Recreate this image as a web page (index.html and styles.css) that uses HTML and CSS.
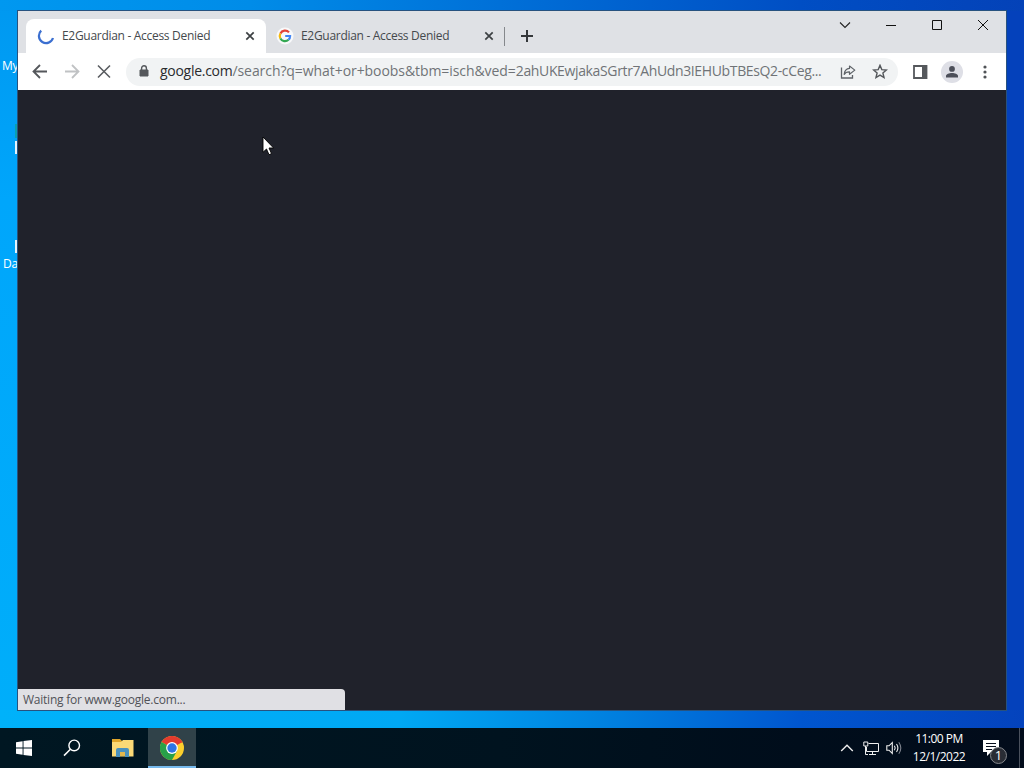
FILE: index.html
```html
<!DOCTYPE html>
<html>
	<head>
		<meta charset="utf-8">
		<title>Desktop</title>
		<link rel="stylesheet" href="styles.css">
	</head>
	<body>
		<div class="desktop">
			<span class="desktop-label label-my">My</span>
			<span class="desktop-icon-edge edge-green"></span>
			<span class="desktop-icon-edge edge-first"></span>
			<span class="desktop-icon-edge edge-second"></span>
			<span class="desktop-label label-da">Da</span>

			<div class="window">
				<div class="tab-strip">
					<div class="tab tab-active">
						<svg class="tab-icon" width="18" height="18" viewBox="0 0 18 18">
							<path d="M4.2 3.6A7.2 7.2 0 1 0 16 11" fill="none" stroke="#3b6fd0" stroke-width="2.2"/>
						</svg>
						<span class="tab-title">E2Guardian - Access Denied</span>
						<svg class="tab-close" width="10" height="10" viewBox="0 0 10 10">
							<path d="M1.3 1.3L8.7 8.7M8.7 1.3L1.3 8.7" stroke="#3c4043" stroke-width="1.7"/>
						</svg>
					</div>
					<div class="tab">
						<svg class="tab-icon" width="18" height="18" viewBox="0 0 18 18">
							<circle cx="9" cy="9" r="8.5" fill="#f8f9fa"/>
							<path d="M13 5.4A5.2 5.2 0 0 0 4.4 6.5" fill="none" stroke="#e44335" stroke-width="2.2"/>
							<path d="M4.4 6.5A5.2 5.2 0 0 0 4.4 11.5" fill="none" stroke="#f6b90a" stroke-width="2.2"/>
							<path d="M4.4 11.5A5.2 5.2 0 0 0 12.5 12.8" fill="none" stroke="#34a853" stroke-width="2.2"/>
							<path d="M12.5 12.8A5.2 5.2 0 0 0 14.1 9H9.2" fill="none" stroke="#4285f4" stroke-width="2.2"/>
						</svg>
						<span class="tab-title">E2Guardian - Access Denied</span>
						<svg class="tab-close" width="10" height="10" viewBox="0 0 10 10">
							<path d="M1.3 1.3L8.7 8.7M8.7 1.3L1.3 8.7" stroke="#3c4043" stroke-width="1.7"/>
						</svg>
					</div>
					<span class="tab-separator"></span>
					<svg class="new-tab" width="12" height="12" viewBox="0 0 12 12">
						<path d="M6 0V12M0 6H12" stroke="#34373a" stroke-width="2"/>
					</svg>
					<div class="window-controls">
						<svg width="12" height="12" viewBox="0 0 12 12"><path d="M1 3.5L6 8.5L11 3.5" fill="none" stroke="#222" stroke-width="1.1"/></svg>
						<svg width="12" height="12" viewBox="0 0 12 12"><path d="M1 6.5H11" stroke="#111"/></svg>
						<svg width="12" height="12" viewBox="0 0 12 12"><path d="M1.5 1.5H10.5V10.5H1.5Z" fill="none" stroke="#111"/></svg>
						<svg width="12" height="12" viewBox="0 0 12 12"><path d="M1 1L11 11M11 1L1 11" stroke="#111"/></svg>
					</div>
				</div>

				<div class="toolbar">
					<div class="nav-buttons">
						<svg width="16" height="16" viewBox="0 0 16 16"><path d="M15 7.5H2M8 1L1.5 7.5L8 14" fill="none" stroke="#54575b" stroke-width="1.8"/></svg>
						<svg width="16" height="16" viewBox="0 0 16 16"><path d="M1 7.5H14M8 1L14.5 7.5L8 14" fill="none" stroke="#c0c2c4" stroke-width="1.8"/></svg>
						<svg width="16" height="16" viewBox="0 0 16 16"><path d="M2 1.5L14 13.5M14 1.5L2 13.5" stroke="#5a5d61" stroke-width="1.6"/></svg>
					</div>
					<div class="address-bar">
						<svg class="lock" width="10" height="13" viewBox="0 0 10 13">
							<path d="M1 5H9V11H1Z" fill="#55585c" stroke="#55585c" stroke-linejoin="round"/>
							<path d="M2.6 5V3.2A2.4 2.4 0 0 1 7.4 3.2V5" fill="none" stroke="#55585c" stroke-width="1.4"/>
						</svg>
						<span class="url"><span class="url-host">google.com</span><span class="url-query">/search?q=what+or+boobs&amp;tbm=isch&amp;ved=</span>2ahUKEwjakaSGrtr7AhUdn3IEHUbTBEsQ2-cCeg...</span>
						<svg class="share" width="16" height="16" viewBox="0 0 16 16">
							<path d="M1.5 3.5V14H12.5V11" fill="none" stroke="#5f6368" stroke-width="1.3"/>
							<path d="M9.5 2L14.8 6.1L9.5 10.3V7.8C7 7.7 5.3 8.5 4.2 10.4C4.5 7 6.3 4.7 9.5 4.4Z" fill="none" stroke="#5f6368" stroke-width="1.2" stroke-linejoin="round"/>
						</svg>
						<svg class="star" width="16" height="16" viewBox="0 0 16 16">
							<path d="M8 1.3L9.8 5.6L14.4 6L10.9 9L12 13.5L8 11.1L4 13.5L5.1 9L1.6 6L6.2 5.6Z" fill="none" stroke="#54575b" stroke-width="1.4"/>
						</svg>
					</div>
					<svg class="side-panel" width="15" height="14" viewBox="0 0 15 14">
						<path d="M1 1H13.5V13H1Z" fill="none" stroke="#55585c" stroke-width="1.8"/>
						<path d="M9 1H14V13H9Z" fill="#55585c"/>
					</svg>
					<svg class="avatar" width="22" height="22" viewBox="0 0 22 22">
						<circle cx="11" cy="11" r="11" fill="#dedfe6"/>
						<circle cx="11" cy="7.9" r="2.9" fill="#4c4f59"/>
						<path d="M5 16.5V15C5 12.8 8.2 11.9 11 11.9S17 12.8 17 15V16.5Z" fill="#4c4f59"/>
					</svg>
					<svg class="menu" width="4" height="14" viewBox="0 0 4 14">
						<circle cx="2" cy="2" r="1.6" fill="#505357"/>
						<circle cx="2" cy="7" r="1.6" fill="#505357"/>
						<circle cx="2" cy="12" r="1.6" fill="#505357"/>
					</svg>
				</div>

				<div class="page">
					<div class="status">Waiting for www.google.com...</div>
				</div>
			</div>

			<svg class="cursor" width="13" height="20" viewBox="0 0 13 20">
				<path d="M1 1V16.3L4.5 13L7 18.7L9.5 17.6L7 12H11.6Z" fill="#fff" stroke="#000" stroke-width="0.9"/>
			</svg>
		</div>

		<div class="taskbar">
			<div class="task">
				<svg width="16" height="16" viewBox="0 0 16 16">
					<path d="M0 2.2L6.6 1.3V7.5H0ZM7.5 1.1L16 0V7.5H7.5ZM0 8.5H6.6V14.7L0 13.8ZM7.5 8.5H16V16L7.5 14.9Z" fill="#fff"/>
				</svg>
			</div>
			<div class="task">
				<svg width="18" height="18" viewBox="0 0 18 18">
					<circle cx="11.2" cy="6.4" r="5.3" fill="none" stroke="#fff" stroke-width="1.4"/>
					<path d="M7.4 10.2L1 16.6" stroke="#fff" stroke-width="1.5"/>
				</svg>
			</div>
			<div class="task">
				<svg class="folder" width="22" height="18" viewBox="0 0 22 18">
					<path d="M0 0H8L10 2H21V6H0Z" fill="#e0a62b"/>
					<path d="M0 3H9L11 1H21.5V17.5H0Z" fill="#fbd976"/>
					<path d="M4 18V11Q4 9 6 9H15Q17 9 17 11V18H13V13H8V18Z" fill="#4a91bd"/>
					<path d="M8 13H13V17H8Z" fill="#e2b84e"/>
				</svg>
			</div>
			<div class="task task-active">
				<svg width="24" height="24" viewBox="0 0 24 24">
					<circle cx="12" cy="12" r="12" fill="#fbcf2d"/>
					<path d="M12 12L1.6 6A12 12 0 0 1 22.4 6Z" fill="#e33b2e"/>
					<path d="M12 6.5H22.6L22.4 6L12 5Z" fill="#e33b2e"/>
					<path d="M1.6 6A12 12 0 0 0 12 24L17 15L12 12Z" fill="#28a149"/>
					<circle cx="12" cy="12" r="5.9" fill="#fff"/>
					<circle cx="12" cy="12" r="4.7" fill="#2e75e4"/>
				</svg>
			</div>
			<div class="tray">
				<svg class="tray-chevron" width="14" height="10" viewBox="0 0 14 10"><path d="M1.2 8L7 2.2L12.8 8" fill="none" stroke="#eee" stroke-width="1.4"/></svg>
				<svg class="tray-network" width="17" height="15" viewBox="0 0 17 15">
					<path d="M5.5 2.5H15.5V10.5H3.5V6M9.5 10.5V13.5M6 13.5H13" fill="none" stroke="#eee"/>
					<path d="M.8 1H4.8V5H.8ZM2.5 5V13.5H5" fill="none" stroke="#eee"/>
				</svg>
				<svg class="tray-sound" width="17" height="14" viewBox="0 0 17 14">
					<path d="M.8 4.8H3L6.3 1.5V12.5L3 9.2H.8Z" fill="none" stroke="#eee" stroke-width="1.1"/>
					<path d="M8.4 4.7Q10 7 8.4 9.3M10.5 3Q13.3 7 10.5 11" fill="none" stroke="#eee" stroke-width="1.1"/>
					<path d="M12.8 1.3Q16.8 7 12.8 12.7" fill="none" stroke="#7d828c" stroke-width="1.1"/>
				</svg>
				<div class="clock">
					<span class="clock-time">11:00 PM</span>
					<span class="clock-date">12/1/2022</span>
				</div>
				<div class="notifications">
					<svg width="17" height="17" viewBox="0 0 17 17">
						<path d="M0 0H16V12H8L4 16V12H0Z" fill="#fff"/>
						<path d="M3 3.5H13M3 6.5H13M3 9.5H9" stroke="#08101e"/>
					</svg>
					<span class="badge">1</span>
				</div>
				<span class="show-desktop"></span>
			</div>
		</div>
	</body>
</html>
```
FILE: styles.css
```css
body {
	margin: 0;
	width: 1024px;
	height: 768px;
	overflow: hidden;
	display: flex;
	flex-direction: column;
	font-family: "Open Sans", "Noto Sans", sans-serif;
	font-size: 12px;
}

svg {
	display: block;
	flex: none;
}

.desktop {
	position: relative;
	height: 728px;
	background:
		linear-gradient(90deg, #0098f0 0, #008ce8 250px, #0070d8 500px, #004ec4 800px, #0442b8 1024px) top / 100% 11px no-repeat,
		linear-gradient(90deg, #00b2fa 0, #00a8f4 400px, #0082e0 600px, #0056cf 800px, #0443bd 1024px) bottom / 100% 18px no-repeat,
		linear-gradient(180deg, #0098f0, #00a6fb 200px, #00aefa) left / 50% 100% no-repeat,
		#0441bb;
}

/* desktop icons sticking out from behind the window */
.desktop-label {
	position: absolute;
	color: #fff;
	line-height: 16px;
	letter-spacing: -0.2px;
}

.label-my {
	left: 2px;
	top: 58px;
}

.label-da {
	left: 3px;
	top: 256px;
}

.desktop-icon-edge {
	position: absolute;
	left: 15px;
	width: 2px;
	height: 13px;
	background: #e6f3fb;
}

.edge-green {
	top: 124px;
	height: 14px;
	background: #0b9fae;
}

.edge-first {
	top: 141px;
}

.edge-second {
	top: 240px;
}

.window {
	position: absolute;
	left: 17px;
	top: 10px;
	width: 988px;
	height: 699px;
	border: 1px solid #27527f;
	display: flex;
	flex-direction: column;
	background: #fff;
}

.tab-strip {
	height: 42px;
	display: flex;
	align-items: flex-end;
	background: #dfe1e5;
}

.tab {
	box-sizing: border-box;
	width: 238px;
	height: 34px;
	display: flex;
	align-items: center;
	padding: 0 10px 0 10px;
	color: #45494d;
}

.tab-active {
	width: 240px;
	margin-left: 8px;
	padding-left: 11px;
	padding-right: 11px;
	border-radius: 8px 8px 0 0;
	background: #fff;
}

.tab-title {
	margin-left: 7px;
	padding-bottom: 1px;
	letter-spacing: -0.3px;
	white-space: nowrap;
}

.tab-close {
	margin-left: auto;
}

.tab-separator {
	width: 1px;
	height: 19px;
	margin: 0 16px 7px 0;
	background: #85888c;
}

.new-tab {
	margin-bottom: 11px;
}

.window-controls {
	display: flex;
	gap: 34px;
	align-self: flex-start;
	margin: 8px 17px 0 auto;
}

.toolbar {
	height: 37px;
	display: flex;
	align-items: center;
	background: #fff;
}

.nav-buttons {
	display: flex;
	gap: 16px;
	margin-left: 14px;
}

.address-bar {
	width: 772px;
	height: 28px;
	margin-left: 14px;
	border-radius: 14px;
	display: flex;
	align-items: center;
	background: #f1f3f4;
}

.lock {
	margin-left: 13px;
}

.url {
	width: 664px;
	margin-left: 11px;
	padding-bottom: 2px;
	color: #707377;
	font-size: 14px;
	letter-spacing: -0.36px;
	white-space: nowrap;
}

.url-host {
	color: #292b2e;
	letter-spacing: -0.28px;
}

.url-query {
	letter-spacing: -0.07px;
}

.share {
	margin-left: 16px;
}

.star {
	margin-left: 16px;
}

.side-panel {
	margin-left: 15px;
}

.avatar {
	margin-left: 13px;
}

.menu {
	margin-left: 20px;
}

.page {
	flex: 1;
	display: flex;
	align-items: flex-end;
	background: #20222b;
}

.status {
	box-sizing: border-box;
	width: 327px;
	height: 21px;
	padding-left: 5px;
	border-radius: 0 4px 0 0;
	background: #e0e0e4;
	color: #505257;
	line-height: 22px;
	letter-spacing: -0.24px;
}

.cursor {
	position: absolute;
	left: 262px;
	top: 136px;
}

.taskbar {
	height: 40px;
	display: flex;
	background: linear-gradient(90deg, #001722, #00131f 500px, #000d1b 800px, #020c1b);
}

.task {
	width: 48px;
	display: flex;
	align-items: center;
	justify-content: center;
}

.folder {
	margin-left: 5px;
}

.task-active {
	box-sizing: border-box;
	margin-left: 4px;
	padding-top: 2px;
	border-bottom: 2px solid #76b9ed;
	background: #304249;
}

.tray {
	flex: 1;
	display: flex;
	align-items: center;
	justify-content: flex-end;
	color: #fff;
}

.tray-network {
	margin-left: 9px;
}

.tray-sound {
	margin-left: 6px;
}

.clock {
	width: 56px;
	margin-left: 8px;
	display: flex;
	flex-direction: column;
	align-items: center;
	line-height: 18px;
	letter-spacing: -0.5px;
}

.notifications {
	position: relative;
	margin: 0 19px 0 16px;
}

.badge {
	position: absolute;
	left: 7px;
	top: 7px;
	width: 15px;
	height: 15px;
	border: 1px solid #85888d;
	border-radius: 50%;
	background: #292d35;
	font-size: 13px;
	line-height: 15px;
	text-align: center;
}

.show-desktop {
	width: 1px;
	height: 40px;
	margin-right: 4px;
	background: #4a515d;
}
```
